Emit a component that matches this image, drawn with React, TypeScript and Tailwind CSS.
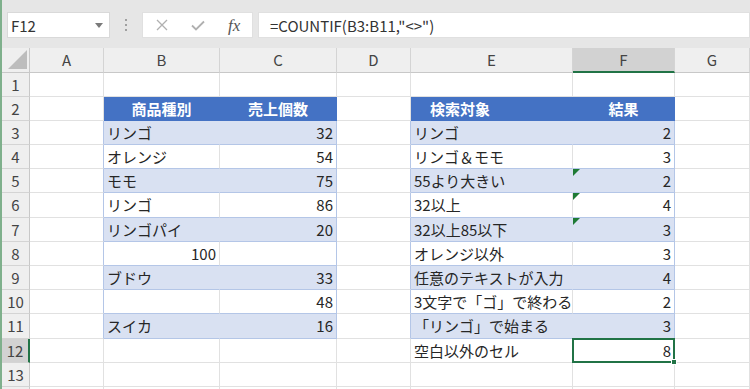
import React from "react";

type Kind = "head" | "band" | "white" | "none";
type Pair = { kind: Kind; l?: string; r?: string; lRight?: boolean; tri?: boolean; sel?: boolean };

// B:C の表と E:F の表、行ごと
const rows: { n: number; bc: Pair; ef: Pair }[] = [
  { n: 1, bc: { kind: "none" }, ef: { kind: "none" } },
  { n: 2, bc: { kind: "head", l: "商品種別", r: "売上個数" }, ef: { kind: "head", l: "検索対象", r: "結果" } },
  { n: 3, bc: { kind: "band", l: "リンゴ", r: "32" }, ef: { kind: "band", l: "リンゴ", r: "2" } },
  { n: 4, bc: { kind: "white", l: "オレンジ", r: "54" }, ef: { kind: "white", l: "リンゴ＆モモ", r: "3" } },
  { n: 5, bc: { kind: "band", l: "モモ", r: "75" }, ef: { kind: "band", l: "55より大きい", r: "2", tri: true } },
  { n: 6, bc: { kind: "white", l: "リンゴ", r: "86" }, ef: { kind: "white", l: "32以上", r: "4", tri: true } },
  { n: 7, bc: { kind: "band", l: "リンゴパイ", r: "20" }, ef: { kind: "band", l: "32以上85以下", r: "3", tri: true } },
  { n: 8, bc: { kind: "white", l: "100", r: "", lRight: true }, ef: { kind: "white", l: "オレンジ以外", r: "3" } },
  { n: 9, bc: { kind: "band", l: "ブドウ", r: "33" }, ef: { kind: "band", l: "任意のテキストが入力", r: "4" } },
  { n: 10, bc: { kind: "white", l: "", r: "48" }, ef: { kind: "white", l: "3文字で「ゴ」で終わる", r: "2" } },
  { n: 11, bc: { kind: "band", l: "スイカ", r: "16" }, ef: { kind: "band", l: "「リンゴ」で始まる", r: "3" } },
  { n: 12, bc: { kind: "none" }, ef: { kind: "none", l: "空白以外のセル", r: "8", sel: true } },
  { n: 13, bc: { kind: "none" }, ef: { kind: "none" } },
  { n: 14, bc: { kind: "none" }, ef: { kind: "none" } },
];

const leftCls: Record<Kind, string> = {
  head: "bg-[#4472c4] border-r-[#4472c4] border-b-[#4472c4] text-white font-bold",
  band: "bg-[#d9e1f2] border-r-[#d9e1f2] border-b-[#b4c6e7]",
  white: "bg-white border-r-[#e1e1e1] border-b-[#b4c6e7]",
  none: "bg-white border-r-[#e1e1e1] border-b-[#e1e1e1]",
};
const rightCls: Record<Kind, string> = {
  head: "bg-[#4472c4] border-r-[#4472c4] border-b-[#4472c4] text-white font-bold",
  band: "bg-[#d9e1f2] border-r-[#b4c6e7] border-b-[#b4c6e7]",
  white: "bg-white border-r-[#b4c6e7] border-b-[#b4c6e7]",
  none: "bg-white border-r-[#e1e1e1] border-b-[#e1e1e1]",
};

const Cell = ({ w, cls, children }: { w: string; cls: string; children?: React.ReactNode }) => (
  <div className={`${w} relative h-full shrink-0 border-r border-b overflow-hidden whitespace-nowrap px-[3px] leading-[23px] ${cls}`}>
    {children}
  </div>
);

const ErrTri = () => (
  <svg className="absolute left-0 top-0" width="7" height="7" viewBox="0 0 7 7">
    <polygon points="0,0 7,0 0,7" fill="#1e7a35" />
  </svg>
);

const TableCells = ({ p, lw, rw, first }: { p: Pair; lw: string; rw: string; first: boolean }) => {
  const headL = p.kind === "head" ? (first ? "text-center" : "pl-[19px]") : "";
  return (
    <>
      <Cell w={lw} cls={`${leftCls[p.kind]} ${p.lRight ? "text-right" : ""} ${headL}`}>
        {p.l}
      </Cell>
      <Cell w={rw} cls={`${rightCls[p.kind]} ${p.kind === "head" ? "text-center" : "text-right"} ${p.sel ? "overflow-visible z-10" : ""}`}>
        {p.tri && <ErrTri />}
        {p.r}
        {p.sel && (
          <div className="absolute left-[-1px] top-[-1px] right-[-1px] bottom-[-1px] border-2 border-[#217346]">
            <div className="absolute right-[-4px] bottom-[-4px] w-[6px] h-[6px] bg-[#217346] border border-white" />
          </div>
        )}
      </Cell>
    </>
  );
};

const colLetters = [
  { c: "A", w: "w-[74px]" },
  { c: "B", w: "w-[116px]" },
  { c: "C", w: "w-[117px]" },
  { c: "D", w: "w-[74px]" },
  { c: "E", w: "w-[162px]" },
  { c: "F", w: "w-[102px]" },
  { c: "G", w: "w-[75px]" },
];

export default function App() {
  return (
    <div className="w-[750px] h-[389px] overflow-hidden flex bg-white text-[15px] text-[#262626] font-['Noto_Sans_CJK_JP','Liberation_Sans',sans-serif]">
      {/* ウィンドウ左端の緑 */}
      <div className="w-[2px] shrink-0 bg-[#7fb08c]" />
      <div className="flex-1 flex flex-col">
        {/* 数式バー */}
        <div className="h-[48px] shrink-0 bg-[#e6e6e6] flex items-start pt-[12px]">
          <div className="ml-[5px] w-[103px] h-[26px] bg-white border border-[#d9d9d9] flex items-center justify-between pl-[3px] pr-[6px] text-[#333]">
            <span className="leading-none">F12</span>
            <svg width="8" height="5" viewBox="0 0 8 5">
              <polygon points="0,0 8,0 4,5" fill="#7a7a7a" />
            </svg>
          </div>
          <div className="w-[32px] h-[26px] flex flex-col items-center justify-center gap-[3px]">
            <span className="w-[2px] h-[2px] bg-[#a0a0a0]" />
            <span className="w-[2px] h-[2px] bg-[#a0a0a0]" />
            <span className="w-[2px] h-[2px] bg-[#a0a0a0]" />
          </div>
          <div className="w-[111px] h-[26px] bg-white border border-[#e0e0e0] flex items-center">
            <svg className="ml-[13px]" width="12" height="12" viewBox="0 0 12 12">
              <path d="M1 1 L11 11 M11 1 L1 11" stroke="#b0b0b0" strokeWidth="1.3" />
            </svg>
            <svg className="ml-[23px]" width="14" height="11" viewBox="0 0 14 11">
              <path d="M1 5.5 L5 9.5 L13 1.5" stroke="#b0b0b0" strokeWidth="1.8" fill="none" />
            </svg>
            <span className="ml-[23px] italic text-[17px] text-[#555] font-['Liberation_Serif',serif] leading-none">fx</span>
          </div>
          <div className="ml-[5px] flex-1 h-[26px] bg-white border border-[#e0e0e0] flex items-center pl-[11px] text-[#333]">
            <span className="leading-none">=COUNTIF(B3:B11,"&lt;&gt;")</span>
          </div>
        </div>

        {/* 列見出し */}
        <div className="h-[24.5px] shrink-0 flex bg-[#efefef] text-[#444]">
          <div className="w-[28px] shrink-0 h-full border-r border-b border-[#c8c8c8] relative">
            <svg className="absolute right-[2px] bottom-[3px]" width="19" height="19" viewBox="0 0 19 19">
              <polygon points="19,0 19,19 0,19" fill="#bdbdbd" />
            </svg>
          </div>
          {colLetters.map((c) => (
            <div
              key={c.c}
              className={`${c.w} shrink-0 h-full border-r border-[#d4d4d4] text-center leading-[23px] ${
                c.c === "F" ? "bg-[#d2d2d2] border-b-2 border-b-[#217346]" : "border-b border-b-[#c8c8c8]"
              }`}
            >
              {c.c}
            </div>
          ))}
        </div>

        {/* セル */}
        {rows.map((row) => {
          const inTbl = row.n >= 3 && row.n <= 11;
          const edge = inTbl ? "border-r-[#b4c6e7] border-b-[#e1e1e1]" : "border-[#e1e1e1]";
          return (
            <div key={row.n} className="h-[24.2px] shrink-0 flex">
              <div
                className={`w-[28px] shrink-0 h-full border-b border-[#d4d4d4] text-center leading-[23px] text-[#444] ${
                  row.n === 12 ? "bg-[#d2d2d2] border-r-2 border-r-[#217346]" : "bg-[#efefef] border-r border-r-[#c8c8c8]"
                }`}
              >
                {row.n < 14 ? row.n : null}
              </div>
              <Cell w="w-[74px]" cls={edge} />
              <TableCells p={row.bc} lw="w-[116px]" rw="w-[117px]" first />
              <Cell w="w-[74px]" cls={edge} />
              <TableCells p={row.ef} lw="w-[162px]" rw="w-[102px]" first={false} />
              <Cell w="w-[75px]" cls="border-[#e1e1e1]" />
            </div>
          );
        })}
      </div>
    </div>
  );
}
